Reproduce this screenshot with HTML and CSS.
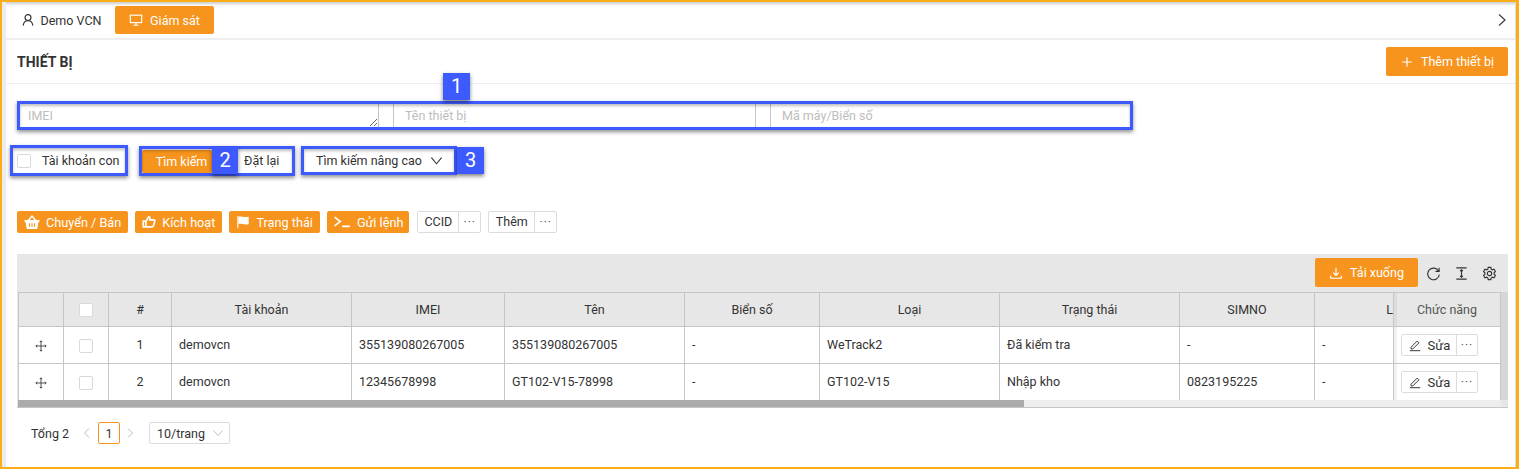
FILE: index.html
```html
<!DOCTYPE html>
<html lang="vi">
<head>
  <meta charset="UTF-8" />
  <title>Thiết bị</title>
  <link rel="stylesheet" href="styles.css">
</head>
<body>
  <div class="frame">
    <!-- Tabs -->
    <div class="tabs">
      <div class="tab">
        <svg class="ico" viewBox="0 0 16 16"><circle cx="8" cy="5.2" r="3.4"/><path d="M2.5 14.5c.4-3.4 2.6-5.6 5.5-5.6s5.100 2.200 5.500 5.600"/></svg>
        Demo VCN
      </div>
      <div class="tab tab-active">
        <svg class="ico" viewBox="0 0 16 16"><rect x="1.500" y="2.500" width="13" height="8.500"/><path d="M5 14h6M8 11v3"/></svg>
        Giám sát
      </div>
      <svg class="tabs-next" viewBox="0 0 10 14"><path d="M2 1.500 8 7l-6 5.500"/></svg>
    </div>

    <div class="head">
      <h1>THIẾT BỊ</h1>
      <button class="btn btn-big">
        <svg class="ico" viewBox="0 0 16 16"><path d="M8 2.500v11M2.500 8h11"/></svg>
        Thêm thiết bị
      </button>
    </div>

    <div class="content">
      <div class="search-row">
        <textarea class="field field-imei" placeholder="IMEI"></textarea>
        <input class="field field-name" placeholder="Tên thiết bị">
        <input class="field field-code" placeholder="Mã máy/Biển số">
      </div>

      <div class="filter-row">
        <label class="sub-account"><span class="check"></span>Tài khoản con</label>
        <button class="btn btn-search">Tìm kiếm</button>
        <button class="btn-plain btn-reset">Đặt lại</button>
        <button class="btn-plain btn-advanced">
          Tìm kiếm nâng cao
          <svg class="ico chevron" viewBox="0 0 14 14"><path d="M1.500 4 7 10.500 12.500 4"/></svg>
        </button>
      </div>

      <div class="action-row">
        <button class="btn">
          <svg class="ico ico-solid ico-basket" viewBox="0 0 16 16"><path d="M8 1 3.600 6H.5v1.800h.9L2.800 15h10.400l1.400-7.200h.9V6h-3.100zM5.600 6 8 3.200 10.400 6z"/><path class="cut" d="M5.500 9.300v3.500M8 9.300v3.500M10.500 9.300v3.500"/></svg>
          Chuyển / Bán
        </button>
        <button class="btn">
          <svg class="ico ico-bold" viewBox="0 0 16 16"><path d="M1.500 7h3v6.500h-3zM4.500 7.500 7.500 2c1.500 0 2 1 1.500 3.500h4.500c1 0 1.500 1 1 2l-1.500 5c-.3.700-.8 1-1.500 1H4.500"/></svg>
          Kích hoạt
        </button>
        <button class="btn">
          <svg class="ico ico-solid" viewBox="0 0 16 16"><path d="M1.500 1h1.200v14H1.500z"/><path d="M2.700 2c3-1.300 5 1.300 11.800 0v8.500c-6.800 1.300-8.800-1.300-11.800 0z"/></svg>
          Trạng thái
        </button>
        <button class="btn btn-send">
          <svg class="ico ico-wide" viewBox="0 0 20 16"><path d="M1.500 2.500 8 7.500l-6.500 5M10 13h9"/></svg>
          Gửi lệnh
        </button>
        <div class="more-group more-first">
          <span class="more-label">CCID</span><span class="more-dots">···</span>
        </div>
        <div class="more-group">
          <span class="more-label more-label-wide">Thêm</span><span class="more-dots">···</span>
        </div>
      </div>

      <div class="panel">
        <div class="toolbar">
          <button class="btn btn-download">
            <svg class="ico" viewBox="0 0 16 16"><path d="M8 2v8.500M4.800 7.500 8 10.700l3.200-3.200M2 11v3h12v-3"/></svg>
            Tải xuống
          </button>
          <svg class="tool-ico" viewBox="0 0 16 16"><path d="M13.500 5.500A6.200 6.200 0 1 0 14.200 9M14 1.800v3.900h-3.900"/></svg>
          <svg class="tool-ico" viewBox="0 0 16 16"><path d="M2.500 2h11M2.500 14h11M8 4.500v7M6.500 5.500 8 4l1.500 1.500M6.500 10.500 8 12l1.500-1.500"/></svg>
          <svg class="tool-ico" viewBox="0 0 16 16"><circle cx="8" cy="8" r="2.300"/><path d="M6.600 1.500h2.800l.4 1.900 1.300.7 1.800-.6 1.400 2.400-1.400 1.300v1.600l1.400 1.300-1.400 2.400-1.800-.6-1.300.7-.4 1.900H6.600l-.4-1.900-1.300-.7-1.800.6-1.400-2.400 1.400-1.300V7.200L1.700 5.900l1.400-2.400 1.800.6 1.300-.7z"/></svg>
        </div>

        <div class="grid-wrap">
          <div class="grid-main">
            <div class="grid-scroll">
              <table class="grid">
                <thead>
                  <tr>
                    <th class="c-drag"></th>
                    <th class="c-check"><span class="check check-head"></span></th>
                    <th class="c-num">#</th>
                    <th class="c-wide">Tài khoản</th>
                    <th class="c-imei">IMEI</th>
                    <th class="c-wide">Tên</th>
                    <th class="c-mid">Biển số</th>
                    <th class="c-wide">Loại</th>
                    <th class="c-wide">Trạng thái</th>
                    <th class="c-mid">SIMNO</th>
                    <th class="c-last">L</th>
                    <th class="c-fixed">Chức năng</th>
                  </tr>
                </thead>
                <tbody>
                  <tr>
                    <td class="center"><svg class="move" viewBox="0 0 14 14"><path d="M7 1v12M1 7h12M5.500 2.500 7 1l1.500 1.500M5.500 11.500 7 13l1.500-1.500M2.500 5.500 1 7l1.500 1.500M11.500 5.500 13 7l-1.500 1.500"/></svg></td>
                    <td class="center"><span class="check check-row"></span></td>
                    <td class="center row-num">1</td>
                    <td>demovcn</td>
                    <td>355139080267005</td>
                    <td>355139080267005</td>
                    <td>-</td>
                    <td>WeTrack2</td>
                    <td>Đã kiểm tra</td>
                    <td>-</td>
                    <td>-</td>
                    <td class="c-fixed">
                      <div class="row-actions">
                        <span class="row-edit"><svg class="edit" viewBox="0 0 16 16"><path d="M3.500 10.500 10.500 3.500l2 2-7 7H3.500zM2 14.500h12"/></svg>Sửa</span><span class="more-dots">···</span>
                      </div>
                    </td>
                  </tr>
                  <tr>
                    <td class="center"><svg class="move" viewBox="0 0 14 14"><path d="M7 1v12M1 7h12M5.500 2.500 7 1l1.500 1.500M5.500 11.500 7 13l1.500-1.500M2.500 5.500 1 7l1.500 1.500M11.500 5.500 13 7l-1.500 1.500"/></svg></td>
                    <td class="center"><span class="check check-row"></span></td>
                    <td class="center row-num">2</td>
                    <td>demovcn</td>
                    <td>12345678998</td>
                    <td>GT102-V15-78998</td>
                    <td>-</td>
                    <td>GT102-V15</td>
                    <td>Nhập kho</td>
                    <td>0823195225</td>
                    <td>-</td>
                    <td class="c-fixed">
                      <div class="row-actions">
                        <span class="row-edit"><svg class="edit" viewBox="0 0 16 16"><path d="M3.500 10.500 10.500 3.500l2 2-7 7H3.500zM2 14.500h12"/></svg>Sửa</span><span class="more-dots">···</span>
                      </div>
                    </td>
                  </tr>
                </tbody>
              </table>
            </div>
            <div class="h-scroll"><div class="h-thumb"></div></div>
          </div>
          <div class="v-scroll"></div>
        </div>
      </div>

      <div class="pager">
        <span>Tổng 2</span>
        <svg class="pager-arrow" viewBox="0 0 10 12"><path d="M7 1.500 2.500 6 7 10.500"/></svg>
        <span class="pager-current">1</span>
        <svg class="pager-arrow" viewBox="0 0 10 12"><path d="M3 1.500 7.500 6 3 10.500"/></svg>
        <span class="pager-size">10/trang
          <svg class="pager-caret" viewBox="0 0 12 12"><path d="M1.500 3.500 6 8.500l4.500-5"/></svg>
        </span>
      </div>
    </div>

    <!-- Annotations drawn over the screen -->
    <div class="mark mark-fields"></div>
    <div class="mark mark-sub"></div>
    <div class="mark mark-buttons"></div>
    <div class="mark mark-advanced"></div>
    <div class="badge badge-1">1</div>
    <div class="badge badge-2">2</div>
    <div class="badge badge-3">3</div>
  </div>
</body>
</html>
```

FILE: styles.css
```css
:root {
  --orange: #f7941d;
  --frame: #fbae17;
  --blue: #3d5afe;
  --line: #c6c6c6;
  --soft: #e7e7e7;
  --text: #333333;
}
* {
  box-sizing: border-box;
}
html, body {
  height: 100%;
}
body {
  margin: 0;
  font-family: Roboto, "Liberation Sans", sans-serif;
  font-size: 12.5px;
  color: var(--text);
  background: #ffffff;
  overflow: hidden;
}
button, input, textarea {
  font-family: inherit;
  font-size: 12.5px;
}
.frame {
  position: relative;
  width: 1519px;
  height: 469px;
  border-style: solid;
  border-color: var(--frame);
  border-width: 2px 3px 2px 2px;
  background: #ffffff;
  padding-left: 4px;
  overflow: hidden;
}
.frame::before {
  content: "";
  position: absolute;
  inset: 0;
  pointer-events: none;
  border-left: 4px solid #ececec;
  border-right: 1px solid #dddddd;
  box-shadow: inset 0 4px 3px -2px rgba(0, 0, 0, 0.2);
}
.ico {
  width: 14px;
  height: 14px;
  fill: none;
  stroke: currentColor;
  stroke-width: 1.300;
  flex: none;
}
.ico-solid {
  fill: currentColor;
  stroke: none;
}
.ico-solid .cut {
  fill: none;
  stroke: var(--orange);
  stroke-width: 1.200;
}
.ico-basket {
  width: 16px;
  height: 16px;
}
.ico-bold {
  stroke-width: 1.900;
}
.ico-wide {
  width: 18px;
  stroke-width: 1.900;
}

/* Tabs */
.tabs {
  height: 38px;
  padding-top: 4px;
  padding-bottom: 4px;
  border-bottom: 2px solid #eeeeee;
  display: flex;
  align-items: stretch;
}
.tab {
  width: 109px;
  padding-left: 1px;
  display: flex;
  align-items: center;
  justify-content: center;
  gap: 6px;
  font-size: 12.5px;
}
.tab-active {
  width: 99px;
  padding-left: 0;
  background: var(--orange);
  color: #ffffff;
  border-radius: 2px;
  gap: 7px;
}
.tabs-next {
  width: 10px;
  height: 14px;
  margin: auto 9px auto auto;
  fill: none;
  stroke: #444444;
  stroke-width: 1.300;
}

/* Title bar */
.head {
  height: 44px;
  padding: 7px 8px 7px 11px;
  border-bottom: 1px solid #eeeeee;
  display: flex;
  justify-content: space-between;
}
.head h1 {
  margin: 0;
  font-size: 14px;
  font-weight: 700;
  line-height: 31px;
  color: #333333;
}
.btn {
  height: 22px;
  padding: 0 7px;
  border: none;
  border-radius: 2px;
  background: var(--orange);
  color: #ffffff;
  display: inline-flex;
  align-items: center;
  gap: 6px;
}
.action-row .btn {
  font-size: 12.7px;
}
.action-row .btn-send {
  padding: 0 6px;
}
.btn-big {
  width: 122px;
  height: 29px;
  justify-content: center;
  gap: 7px;
}

/* Search */
.content {
  padding: 20px 8px 0 11px;
}
.search-row {
  height: 23px;
  margin-left: 2px;
  display: flex;
}
.field {
  height: 23px;
  border: none;
  outline: none;
  background: transparent;
  color: var(--text);
  margin: 0;
}
.field::placeholder {
  color: #bdbdbd;
  opacity: 1;
}
.field-imei {
  width: 360px;
  padding: 3px 9px;
  border-right: 1px solid var(--line);
  resize: both;
  line-height: 17px;
}
.field-name {
  width: 363px;
  margin-left: 14px;
  padding: 0 11px;
  border-left: 1px solid var(--line);
  border-right: 1px solid var(--line);
}
.field-code {
  width: 360px;
  margin-left: 14px;
  padding: 0 11px;
  border-left: 1px solid var(--line);
}

.filter-row {
  height: 23px;
  margin-top: 22px;
  padding-bottom: 1px;
  display: flex;
  align-items: stretch;
}
.sub-account {
  width: 125px;
  display: flex;
  align-items: center;
}
.check {
  display: inline-block;
  width: 14px;
  height: 14px;
  border: 1px solid #d9d9d9;
  border-radius: 2px;
  background: #ffffff;
}
.sub-account .check {
  margin-top: 2px;
  margin-right: 11px;
}
.btn-search {
  width: 70px;
  height: 23px;
  margin-top: 1px;
  justify-content: center;
  padding: 0 0 0 9px;
}
.btn-plain {
  border: none;
  background: transparent;
  color: var(--text);
  padding: 0;
  display: inline-flex;
  align-items: center;
}
.btn-reset {
  width: 82px;
  padding-left: 32px;
}
.btn-advanced {
  margin-left: 22px;
  gap: 8px;
}
.chevron {
  width: 13px;
  height: 13px;
  stroke-width: 1.200;
}

/* Action buttons */
.action-row {
  height: 22px;
  margin-top: 39px;
  display: flex;
  gap: 7px;
}
.more-group {
  display: flex;
  height: 22px;
  border: 1px solid #dcdcdc;
  border-radius: 2px;
}
.more-first {
  margin-left: 1px;
}
.more-label {
  padding: 0 6px;
  line-height: 20px;
  border-right: 1px solid #dcdcdc;
}
.more-label-wide {
  width: 46px;
  padding: 0;
  text-align: center;
}
.more-dots {
  width: 21px;
  line-height: 21px;
  text-align: center;
  font-size: 12px;
  letter-spacing: 1px;
  color: #555555;
}

/* Table */
.panel {
  margin-top: 21px;
  background: var(--soft);
  border-bottom: 1px solid var(--line);
}
.toolbar {
  height: 38px;
  padding: 4px 11px 0 0;
  display: flex;
  justify-content: flex-end;
  gap: 13px;
}
.btn-download {
  width: 103px;
  height: 29px;
  justify-content: center;
  gap: 7px;
  margin-right: -5px;
}
.tool-ico {
  width: 15px;
  height: 15px;
  margin-top: 8px;
  fill: none;
  stroke: #333333;
  stroke-width: 1.200;
}
.grid-wrap {
  display: flex;
  padding-left: 1px;
}
.grid-main {
  width: 1483px;
}
.grid-scroll {
  overflow: hidden;
}
.v-scroll {
  flex: 1;
  background: #d6d6d6;
  margin-bottom: 7px;
}
.grid {
  border-collapse: separate;
  border-spacing: 0;
  table-layout: fixed;
  width: 1554px;
}
.grid th, .grid td {
  border-left: 1px solid var(--line);
  border-bottom: 1px solid var(--line);
  font-weight: 400;
  white-space: nowrap;
  overflow: hidden;
}
.grid th {
  height: 35px;
  background: var(--soft);
  border-top: 1px solid var(--line);
  text-align: center;
}
.grid td {
  height: 37px;
  background: #ffffff;
  padding: 0 7px 2px;
}
.grid tbody tr:last-child td {
  border-bottom: none;
  height: 36px;
}
.grid td.center {
  text-align: center;
  padding: 0;
}
.grid td.row-num {
  padding-bottom: 2px;
}
.c-drag, .c-check {
  width: 45px;
}
.c-num {
  width: 63px;
}
.c-wide {
  width: 180px;
}
.c-imei {
  width: 153px;
}
.c-mid {
  width: 135px;
}
.c-last {
  width: 150px;
}
.grid .c-fixed {
  position: sticky;
  right: 0;
  width: 108px;
  border-left: 1px solid var(--line);
  border-right: 1px solid var(--line);
  box-shadow: inset 3px 0 0 #dcdcdc;
  color: #555555;
}
.grid td.c-fixed {
  padding: 0 0 0 7px;
  box-shadow: inset 3px 0 0 #f1f1f1;
  color: var(--text);
}
.check-head {
  vertical-align: middle;
}
.check-row {
  vertical-align: middle;
}
.move {
  width: 12px;
  height: 12px;
  vertical-align: middle;
  fill: none;
  stroke: #333333;
  stroke-width: 1;
}
.row-actions {
  display: inline-flex;
  height: 22px;
  border: 1px solid #dcdcdc;
  border-radius: 2px;
  vertical-align: middle;
}
.row-actions .more-dots {
  width: 20px;
}
.row-edit {
  width: 55px;
  display: flex;
  align-items: center;
  justify-content: center;
  gap: 6px;
  font-size: 13px;
  border-right: 1px solid #dcdcdc;
}
.edit {
  width: 14px;
  height: 14px;
  fill: none;
  stroke: #333333;
  stroke-width: 1.100;
}
.h-scroll {
  height: 7px;
  background: #eeeeee;
}
.h-thumb {
  width: 1006px;
  height: 7px;
  background: #ababab;
}

/* Pagination */
.pager {
  height: 22px;
  margin-top: 14px;
  padding-left: 14px;
  display: flex;
  align-items: center;
}
.pager-arrow {
  width: 10px;
  height: 12px;
  margin: 0 6px 0 13px;
  fill: none;
  stroke: #bdbdbd;
  stroke-width: 1;
}
.pager-current {
  width: 22px;
  height: 22px;
  line-height: 22px;
  text-align: center;
  border: 1px solid var(--orange);
  border-radius: 2px;
}
.pager-current + .pager-arrow {
  margin: 0 0 0 5px;
}
.pager-size {
  width: 81px;
  height: 22px;
  margin-left: 14px;
  padding-left: 7px;
  border: 1px solid #dcdcdc;
  border-radius: 2px;
  display: flex;
  align-items: center;
  justify-content: space-between;
  padding-right: 5px;
}
.pager-caret {
  width: 12px;
  height: 12px;
  fill: none;
  stroke: #bdbdbd;
  stroke-width: 1;
}

/* Annotations */
.mark {
  position: absolute;
  border: 3px solid var(--blue);
  box-shadow: 0 2px 4px rgba(0, 0, 0, 0.45), inset 0 2px 3px rgba(0, 0, 0, 0.25);
  pointer-events: none;
}
.mark-fields {
  left: 15px;
  top: 99px;
  width: 1116px;
  height: 29px;
}
.mark-sub {
  left: 8px;
  top: 143px;
  width: 118px;
  height: 31px;
}
.mark-buttons {
  left: 137px;
  top: 144px;
  width: 156px;
  height: 30px;
}
.mark-advanced {
  left: 299px;
  top: 144px;
  width: 156px;
  height: 29px;
}
.badge {
  position: absolute;
  width: 27px;
  height: 27px;
  background: var(--blue);
  color: #ffffff;
  font-size: 20px;
  line-height: 27px;
  text-align: center;
  box-shadow: 0 2px 4px rgba(0, 0, 0, 0.5);
}
.badge-1 {
  left: 441px;
  top: 71px;
}
.badge-2 {
  left: 210px;
  top: 145px;
  width: 26px;
}
.badge-3 {
  left: 455px;
  top: 145px;
}
```
